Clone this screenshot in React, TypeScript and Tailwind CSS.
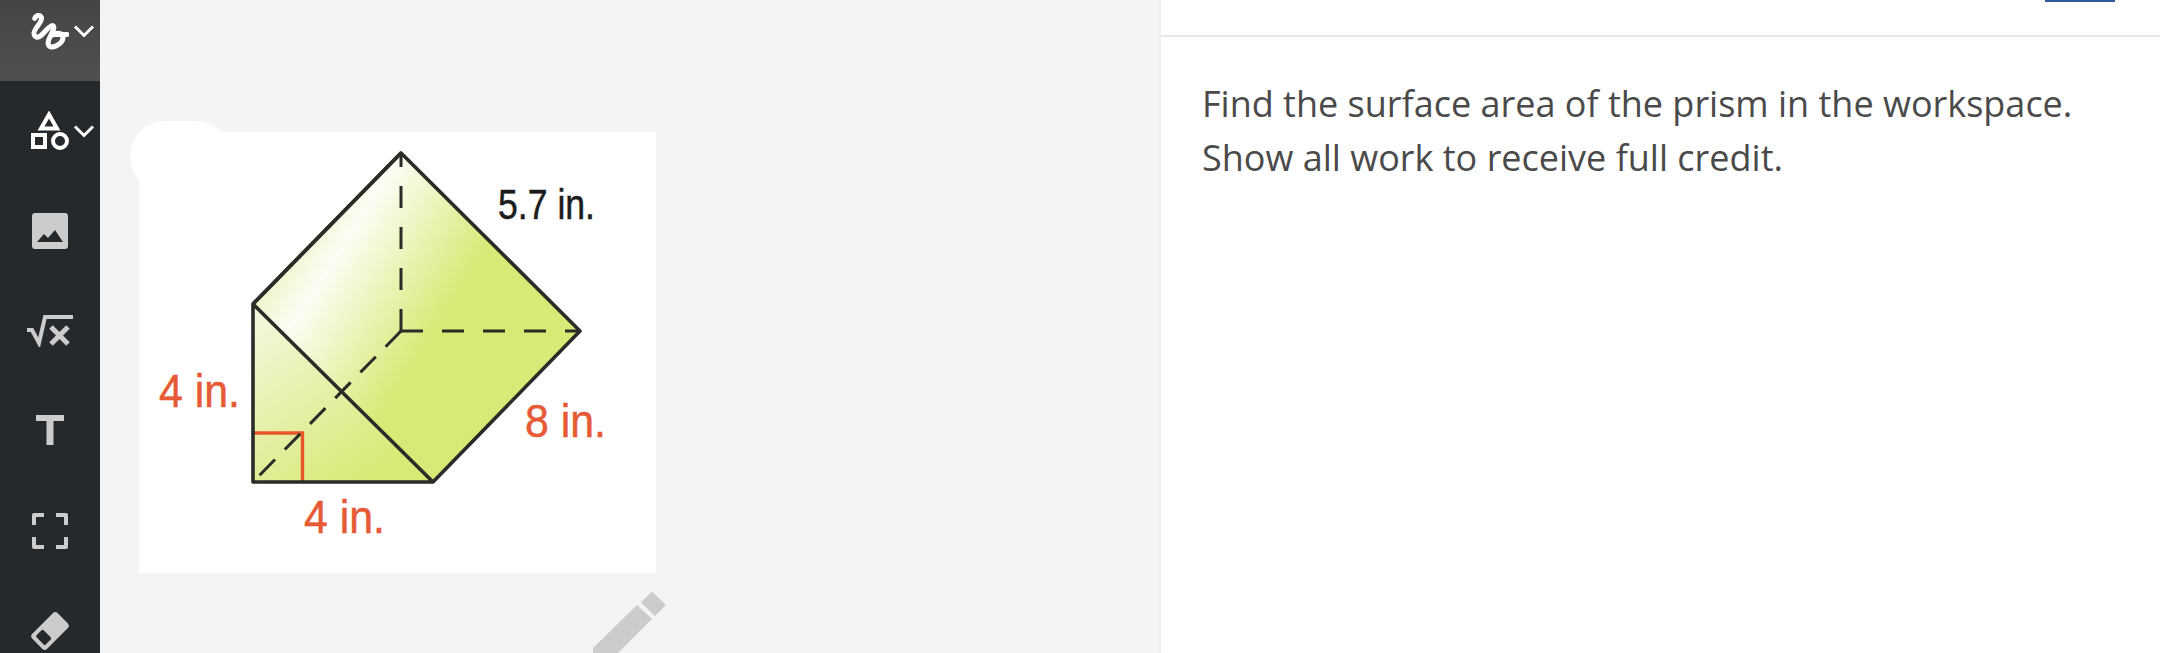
import { ReactNode } from "react";

function ToolSlot({ children, active }: { children: ReactNode; active?: boolean }) {
  return (
    <div
      className={
        active
          ? "relative flex h-[81px] w-full shrink-0 justify-center bg-gradient-to-b from-[#444546] to-[#505050] pt-[13px]"
          : "relative flex h-[100px] w-full shrink-0 items-center justify-center"
      }
    >
      {children}
    </div>
  );
}

function Chevron({ top }: { top: string }) {
  return (
    <svg className={"absolute left-[73px] " + top} width="22" height="14" viewBox="0 0 22 14" fill="none">
      <path d="M2 2.5 11 11.5 20 2.5" stroke="#fff" strokeWidth="3" />
    </svg>
  );
}

function Sidebar() {
  return (
    <div className="flex h-full w-[100px] shrink-0 flex-col items-center overflow-hidden bg-[#26292c]">
      <ToolSlot active>
        <svg width="38" height="38" viewBox="0 0 38 38" fill="none">
          <path
            d="M3.7 5.5C5 2 9 1.5 10.5 4.5C12 9 2 16 3 21C4 25 7 25 10 22.5C14 19 19 12 21.5 12.5C25 13 21 20 18.5 25C16 30 17 34 21 34C26 34 32 29 32 24.5C32 20 26 19 21.5 22M22 21.5H36"
            stroke="#fff"
            strokeWidth="5"
            strokeLinecap="round"
          />
        </svg>
        <Chevron top="top-[24px]" />
      </ToolSlot>
      <ToolSlot>
        <svg width="38" height="40" viewBox="0 0 38 40" fill="none">
          <path d="M18 3.5 26 17.5H10Z" stroke="#fff" strokeWidth="4" />
          <rect x="2" y="24" width="12" height="12" stroke="#fff" strokeWidth="4" />
          <circle cx="29" cy="30" r="7" stroke="#fff" strokeWidth="4" />
        </svg>
        <Chevron top="top-[43px]" />
      </ToolSlot>
      <ToolSlot>
        <svg width="36" height="36" viewBox="0 0 36 36">
          <rect width="36" height="36" rx="3" fill="#cbcccd" />
          <path d="M5 29 12 21 16 25 23 17 31 29Z" fill="#26292c" />
        </svg>
      </ToolSlot>
      <ToolSlot>
        <svg width="46" height="32" viewBox="0 0 46 32" fill="none">
          <path d="M0 15H5L12 28 18 2H46" stroke="#cbcccd" strokeWidth="4" />
          <path d="M24 12 41 29M41 12 24 29" stroke="#cbcccd" strokeWidth="5" />
        </svg>
      </ToolSlot>
      <ToolSlot>
        <svg width="28" height="30" viewBox="0 0 28 30" className="-mt-[2px]">
          <path d="M0 0H28V6H17.5V30H10.5V6H0Z" fill="#cbcccd" />
        </svg>
      </ToolSlot>
      <ToolSlot>
        <svg width="36" height="36" viewBox="0 0 36 36" fill="none">
          <path
            d="M2 12V2H12M24 2H34V12M34 24V34H24M12 34H2V24"
            stroke="#cbcccd"
            strokeWidth="4"
            strokeLinejoin="round"
          />
        </svg>
      </ToolSlot>
      <ToolSlot>
        <svg width="44" height="40" viewBox="0 0 44 40">
          <g transform="rotate(-45 22 20)">
            <rect x="4" y="9.5" width="36" height="21" rx="3.5" fill="#cbcccd" />
            <rect x="8" y="13.5" width="10" height="13" rx="1.5" fill="#26292c" />
          </g>
        </svg>
      </ToolSlot>
    </div>
  );
}

function PrismFigure() {
  return (
    <svg
      viewBox="0 0 517 441"
      width="517"
      height="441"
      className="block"
      style={{ fontFamily: "'Liberation Sans', sans-serif" }}
    >
      <defs>
        <linearGradient id="prismFill" gradientUnits="userSpaceOnUse" x1="126" y1="106" x2="290" y2="210">
          <stop offset="0" stopColor="#e8f0b4" />
          <stop offset="0.36" stopColor="#fcfdf4" />
          <stop offset="1" stopColor="#d8e975" />
        </linearGradient>
        <linearGradient id="frontFill" gradientUnits="userSpaceOnUse" x1="114" y1="180" x2="225" y2="350">
          <stop offset="0" stopColor="#f4f8df" />
          <stop offset="1" stopColor="#d8e975" />
        </linearGradient>
      </defs>
      <g className="blur-[0.4px]">
        <path d="M262 21 441 199 294 350 114 172Z" fill="url(#prismFill)" />
        <path d="M114 172V350H294Z" fill="url(#frontFill)" />
        <path d="M114 301H163.5V350" fill="none" stroke="#e8562a" strokeWidth="3.4" />
        <g fill="none" stroke="#2a2c28" strokeWidth="3">
          <path d="M262 199V21" strokeDasharray="22 19" />
          <path d="M262 199H441" strokeDasharray="22 19" />
          <path d="M262 199 114 350" strokeDasharray="22 14" />
          <path
            d="M262 21 441 199 294 350H114V172ZM114 172 294 350"
            strokeWidth="3.6"
            strokeLinejoin="round"
          />
          <path d="M262 21 114 172" strokeWidth="3.6" />
        </g>
      </g>
      <text
        x="359"
        y="87"
        fontSize="43"
        textLength="97"
        lengthAdjust="spacingAndGlyphs"
        fill="#1c1c1c"
        stroke="#1c1c1c"
        strokeWidth="0.5"
      >
        5.7 in.
      </text>
      <g fill="#e65a35" stroke="#e65a35" strokeWidth="0.5" fontSize="47">
        <text x="20" y="275" textLength="81" lengthAdjust="spacingAndGlyphs">4 in.</text>
        <text x="386" y="305" textLength="81" lengthAdjust="spacingAndGlyphs">8 in.</text>
        <text x="165" y="401" textLength="81" lengthAdjust="spacingAndGlyphs">4 in.</text>
      </g>
    </svg>
  );
}

export default function App() {
  return (
    <div className="flex h-[653px] w-[2160px] overflow-hidden bg-[#f3f4f6]">
      <Sidebar />
      <div className="relative flex-1">
        <div className="ml-[39px] mt-[132px] w-fit bg-white">
          <PrismFigure />
        </div>
        {/* correction-fluid blob sitting over the corner of the figure */}
        <div className="absolute left-[30px] top-[121px] h-[70px] w-[100px] rounded-[34px] bg-white" />
        <svg className="absolute left-[490px] top-[585px]" width="80" height="68" viewBox="0 0 80 68">
          <path d="M47 20 62 34 28 68H3V63Z" fill="#cbcccd" />
          <path
            d="M62 8.5 74 20 65 29 53 17.5Z"
            fill="#cbcccd"
            stroke="#cbcccd"
            strokeWidth="3"
            strokeLinejoin="round"
          />
        </svg>
      </div>
      <div className="flex w-[1001px] shrink-0 flex-col border-l-2 border-[#eceef0] bg-white">
        <div className="flex h-[37px] shrink-0 justify-end border-b-2 border-[#e5e7eb] pr-[45px]">
          <div className="h-[2px] w-[70px] bg-[#2c5c9e]" />
        </div>
        <div
          className="pl-[41px] pt-[40px] text-[36px] leading-[54px] text-[#4a4a4a]"
          style={{ fontFamily: "'Open Sans', sans-serif" }}
        >
          <p>Find the surface area of the prism in the workspace.</p>
          <p>Show all work to receive full credit.</p>
        </div>
      </div>
    </div>
  );
}
